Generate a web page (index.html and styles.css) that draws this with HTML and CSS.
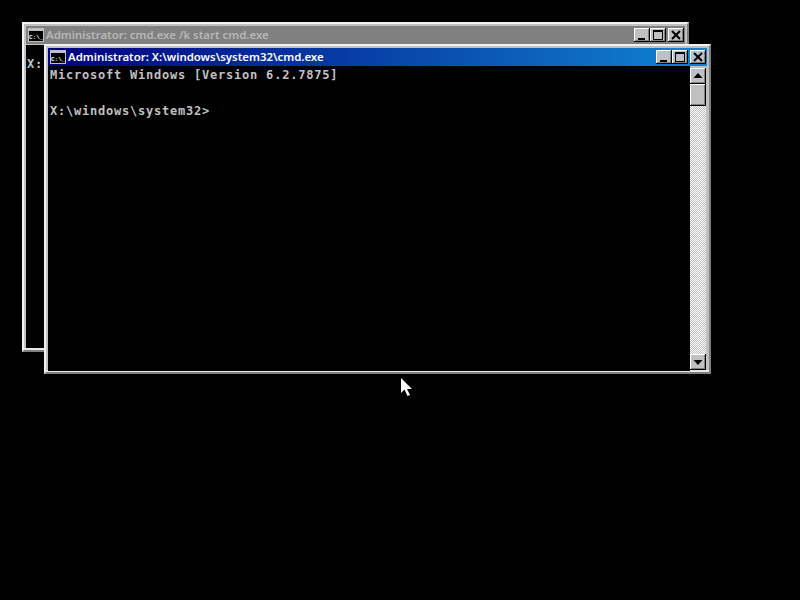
FILE: index.html
```html
<!DOCTYPE html>
<html lang="en">
<head>
<meta charset="utf-8">
<title>cmd.exe</title>
<link rel="stylesheet" href="styles.css">
</head>
<body>
<div class="desktop">
  <section class="win win-back">
    <header class="titlebar">
      <svg class="app-icon" viewBox="0 0 16 14"><rect width="16" height="14" fill="#c0c0c0"/><rect x="1" y="3" width="14" height="10" fill="#000"/><text x="1" y="10.500" class="icon-text">C:\_</text></svg>
      <span class="title">Administrator: cmd.exe /k start cmd.exe</span>
      <div class="controls">
        <button class="btn"><svg viewBox="0 0 16 14"><rect x="4" y="10" width="7" height="2" fill="#000"/></svg></button>
        <button class="btn btn-max"><svg viewBox="0 0 16 14"><path d="M3 2h10v10H3zM4 4v7h8V4z" fill="#000" fill-rule="evenodd"/></svg></button>
        <button class="btn btn-close"><svg viewBox="0 0 16 14"><path d="M4 3l8 8M12 3l-8 8" stroke="#000" stroke-width="2"/></svg></button>
      </div>
    </header>
    <pre class="console">X:</pre>
  </section>

  <section class="win win-front">
    <header class="titlebar">
      <svg class="app-icon" viewBox="0 0 16 14"><rect width="16" height="14" fill="#c0c0c0"/><rect x="1" y="3" width="14" height="10" fill="#000"/><text x="1" y="10.500" class="icon-text">C:\_</text></svg>
      <span class="title">Administrator: X:\windows\system32\cmd.exe</span>
      <div class="controls">
        <button class="btn"><svg viewBox="0 0 16 14"><rect x="4" y="10" width="7" height="2" fill="#000"/></svg></button>
        <button class="btn btn-max"><svg viewBox="0 0 16 14"><path d="M3 2h10v10H3zM4 4v7h8V4z" fill="#000" fill-rule="evenodd"/></svg></button>
        <button class="btn btn-close"><svg viewBox="0 0 16 14"><path d="M4 3l8 8M12 3l-8 8" stroke="#000" stroke-width="2"/></svg></button>
      </div>
    </header>
    <div class="client">
      <pre class="console">
Microsoft Windows [Version 6.2.7875]

X:\windows\system32&gt;</pre>
      <div class="scrollbar">
        <button class="sb-btn"><svg viewBox="0 0 16 16"><path d="M8 5l-4.500 5h9z" fill="#000"/></svg></button>
        <div class="sb-thumb"></div>
        <div class="sb-track"></div>
        <button class="sb-btn"><svg viewBox="0 0 16 16"><path d="M8 11L3.500 6h9z" fill="#000"/></svg></button>
      </div>
    </div>
  </section>

  <svg class="cursor" viewBox="0 0 12 20"><path d="M1 1v15l3.500-3.500L7.500 19l2.500-1-3-6h5z" fill="#fff"/></svg>
</div>
</body>
</html>
```
FILE: styles.css
```css
html, body {
  margin: 0;
  padding: 0;
  background: #000;
}
.desktop {
  position: relative;
  width: 800px;
  height: 600px;
  overflow: hidden;
  background: #000;
}
.win {
  position: absolute;
  width: 667px;
  height: 330px;
  box-sizing: border-box;
  display: flex;
  flex-direction: column;
  background: #c0c0c0;
  padding: 2px;
  border: 2px solid;
  border-color: #f2f2f2 #808080 #808080 #f2f2f2;
  box-shadow: inset 0 -2px 0 #e8e8e8;
}
.win-back { left: 22px; top: 22px; }
.win-front { left: 44px; top: 44px; }
.titlebar {
  height: 18px;
  flex: none;
  display: flex;
  align-items: center;
  gap: 2px;
  padding: 0 1px 0 2px;
  font: 12px/18px "Noto Sans", "Liberation Sans", sans-serif;
}
.win-back .titlebar {
  background: #808080;
  color: #b8b8b8;
}
.win-front .titlebar {
  background: linear-gradient(90deg, #000080, #1084d0);
  color: #fff;
}
.title {
  flex: 1;
  white-space: nowrap;
  font-weight: 600;
  font-size: 11.400px;
}
.app-icon {
  width: 16px;
  height: 14px;
  flex: none;
}
.icon-text {
  font: 700 6px "Liberation Mono", monospace;
  fill: #fff;
}
.controls {
  display: flex;
  flex: none;
}
.btn {
  width: 16px;
  height: 14px;
  padding: 0;
  display: block;
  background: #c0c0c0;
  border: none;
  box-shadow: inset -1px -1px 0 #000, inset 1px 1px 0 #fff, inset -2px -2px 0 #808080;
}
.btn svg, .sb-btn svg {
  display: block;
  width: 100%;
  height: 100%;
}
.btn-close { margin-left: 2px; }
.client {
  flex: 1;
  min-height: 0;
  display: flex;
  margin-top: 1px;
  margin-bottom: -1px;
}
.console {
  flex: 1;
  margin: 0;
  padding: 0 2px;
  color: #c0c0c0;
  background: #000;
  font: 700 12px/18px "DejaVu Sans Mono", monospace;
  letter-spacing: 0.780px;
  overflow: hidden;
}
.win-back .console {
  margin-top: 1px;
  padding: 10px 1px 0;
}
.client .console { margin-top: -1px; }
.scrollbar {
  width: 16px;
  flex: none;
  display: flex;
  flex-direction: column;
  margin: 1px 1px 1px 0;
}
.sb-btn {
  height: 16px;
  padding: 0;
  flex: none;
  background: #c0c0c0;
  border: none;
  box-shadow: inset -1px -1px 0 #000, inset 1px 1px 0 #fff, inset -2px -2px 0 #808080;
}
.sb-thumb {
  height: 22px;
  flex: none;
  background: #c0c0c0;
  box-shadow: inset -1px -1px 0 #000, inset 1px 1px 0 #fff, inset -2px -2px 0 #808080;
}
.sb-track {
  flex: 1;
  background-color: #fff;
  background-image: repeating-conic-gradient(#c0c0c0 0 25%, #fff 0 50%);
  background-size: 2px 2px;
}
.cursor {
  position: absolute;
  left: 400px;
  top: 377px;
  width: 12px;
  height: 20px;
}
```
